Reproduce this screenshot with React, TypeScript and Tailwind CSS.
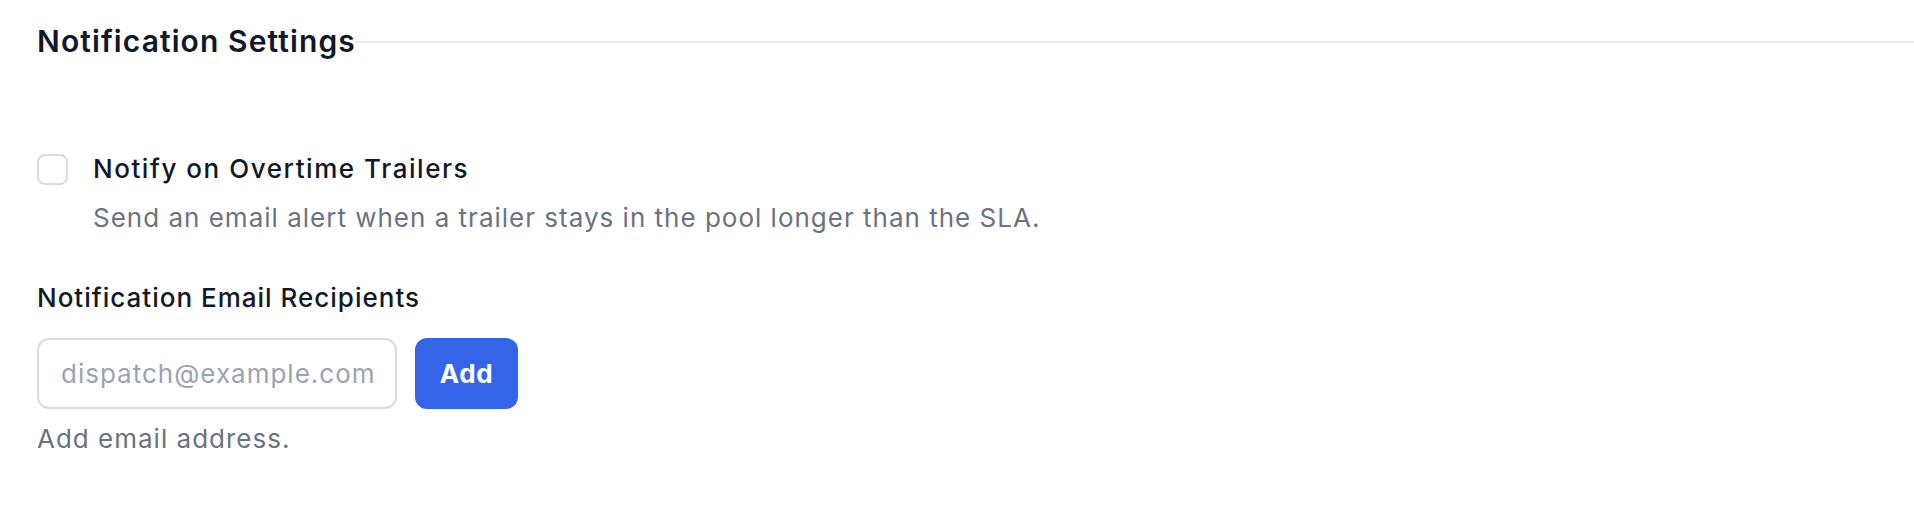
import React, { useState } from 'react';

const App: React.FC = () => {
  const [checked, setChecked] = useState(false);
  const [email, setEmail] = useState('');

  return (
    <div className="min-h-screen bg-white pl-[37px] pt-[19px] font-['Inter',sans-serif] text-[#111827]">
      {/* Section header with rule */}
      <div className="flex items-center">
        <h2 className="text-[30px] font-semibold leading-[45px] tracking-[1.1px] text-[#111827]">Notification Settings</h2>
        <div className="h-[2px] flex-1 bg-[#e8e9ed]" />
      </div>

      <div className="mt-[87px] flex items-start gap-[25px]">
        <button
          type="button"
          onClick={() => setChecked((c) => !c)}
          className={`mt-[3px] h-[31px] w-[31px] shrink-0 rounded-[8px] border-2 ${
            checked ? 'border-[#3465e8] bg-[#3465e8]' : 'border-[#d9dce1] bg-white'
          }`}
        />
        <div>
          <div className="text-[26px] font-medium leading-[36px] tracking-[1.55px] text-[#111827]">Notify on Overtime Trailers</div>
          <div className="mt-[13px] text-[26px] leading-[36px] tracking-[1px] text-[#6b7280]">
            Send an email alert when a trailer stays in the pool longer than the SLA.
          </div>
        </div>
      </div>

      <div className="mt-[44px] text-[26px] font-medium leading-[36px] tracking-[1px] text-[#111827]">
        Notification Email Recipients
      </div>

      <div className="mt-[22px] flex items-center gap-[18px]">
        <input
          value={email}
          onChange={(e) => setEmail(e.target.value)}
          placeholder="dispatch@example.com"
          className="h-[71px] w-[360px] rounded-[12px] border-2 border-[#d9dce1] bg-white px-[22px] text-[26px] tracking-[1px] text-[#111827] placeholder:text-[#9ca3af] outline-none"
        />
        <button
          type="button"
          className="h-[71px] w-[103px] rounded-[12px] bg-[#3465e8] text-[26px] font-bold tracking-[0.6px] text-white"
        >
          Add
        </button>
      </div>

      <div className="mt-[12px] text-[26px] leading-[36px] tracking-[1px] text-[#6b7280]">Add email address.</div>
    </div>
  );
};

export default App;
